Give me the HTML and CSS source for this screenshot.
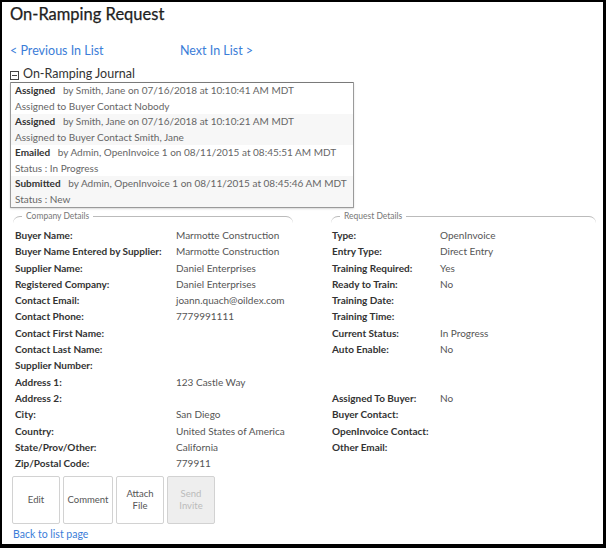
FILE: index.html
```html
<!DOCTYPE html>
<html>
<head>
<meta charset="utf-8">
<link rel="stylesheet" href="styles.css">
</head>
<body>
<div class="frame">
  <h1 class="title">On-Ramping Request</h1>
  <div class="nav">
    <a class="link" href="#">&lt; Previous In List</a>
    <a class="link" href="#">Next In List &gt;</a>
  </div>
  <div class="journal-head">
    <span class="collapse"></span>
    <span>On-Ramping Journal</span>
  </div>
  <div class="journal">
    <div class="entry">
      <div class="line"><b>Assigned</b>&nbsp;&nbsp; by Smith, Jane on 07/16/2018 at 10:10:41 AM MDT</div>
      <div class="line">Assigned to Buyer Contact Nobody</div>
    </div>
    <div class="entry alt">
      <div class="line"><b>Assigned</b>&nbsp;&nbsp; by Smith, Jane on 07/16/2018 at 10:10:21 AM MDT</div>
      <div class="line">Assigned to Buyer Contact Smith, Jane</div>
    </div>
    <div class="entry">
      <div class="line"><b>Emailed</b>&nbsp;&nbsp; by Admin, OpenInvoice 1 on 08/11/2015 at 08:45:51 AM MDT</div>
      <div class="line">Status : In Progress</div>
    </div>
    <div class="entry alt">
      <div class="line"><b>Submitted</b>&nbsp;&nbsp; by Admin, OpenInvoice 1 on 08/11/2015 at 08:45:46 AM MDT</div>
      <div class="line">Status : New</div>
    </div>
  </div>
  <div class="details">
    <fieldset class="group company">
      <legend>Company Details</legend>
      <dl class="rows">
        <dt>Buyer Name:</dt><dd>Marmotte Construction</dd>
        <dt>Buyer Name Entered by Supplier:</dt><dd>Marmotte Construction</dd>
        <dt>Supplier Name:</dt><dd>Daniel Enterprises</dd>
        <dt>Registered Company:</dt><dd>Daniel Enterprises</dd>
        <dt>Contact Email:</dt><dd>joann.quach@oildex.com</dd>
        <dt>Contact Phone:</dt><dd>7779991111</dd>
        <dt>Contact First Name:</dt><dd></dd>
        <dt>Contact Last Name:</dt><dd></dd>
        <dt>Supplier Number:</dt><dd></dd>
        <dt>Address 1:</dt><dd>123 Castle Way</dd>
        <dt>Address 2:</dt><dd></dd>
        <dt>City:</dt><dd>San Diego</dd>
        <dt>Country:</dt><dd>United States of America</dd>
        <dt>State/Prov/Other:</dt><dd>California</dd>
        <dt>Zip/Postal Code:</dt><dd>779911</dd>
      </dl>
    </fieldset>
    <fieldset class="group request">
      <legend>Request Details</legend>
      <dl class="rows">
        <dt>Type:</dt><dd>OpenInvoice</dd>
        <dt>Entry Type:</dt><dd>Direct Entry</dd>
        <dt>Training Required:</dt><dd>Yes</dd>
        <dt>Ready to Train:</dt><dd>No</dd>
        <dt>Training Date:</dt><dd></dd>
        <dt>Training Time:</dt><dd></dd>
        <dt>Current Status:</dt><dd>In Progress</dd>
        <dt>Auto Enable:</dt><dd>No</dd>
        <dt class="blank">&nbsp;</dt><dd></dd>
        <dt class="blank">&nbsp;</dt><dd></dd>
        <dt>Assigned To Buyer:</dt><dd>No</dd>
        <dt>Buyer Contact:</dt><dd></dd>
        <dt>OpenInvoice Contact:</dt><dd></dd>
        <dt>Other Email:</dt><dd></dd>
      </dl>
    </fieldset>
  </div>
  <div class="actions">
    <button class="btn">Edit</button>
    <button class="btn">Comment</button>
    <button class="btn">Attach<br>File</button>
    <button class="btn disabled" disabled>Send<br>Invite</button>
  </div>
  <a class="link back" href="#">Back to list page</a>
</div>
</body>
</html>
```

FILE: styles.css
```css
* { box-sizing: border-box; }
html, body { margin: 0; padding: 0; background: #fff; }
body { font-family: Lato, "Open Sans", Arial, sans-serif; color: #444; }

.frame {
  width: 606px;
  height: 548px;
  border-style: solid;
  border-color: #000;
  border-width: 2px 3px 4px 2px;
  padding: 0 0 0 8px;
  background: #fff;
  overflow: hidden;
}

.title {
  margin: 0;
  padding-top: 3px;
  font-size: 16.5px;
  line-height: 19px;
  font-weight: 400;
  color: #1e1e1e;
  -webkit-text-stroke: 0.25px #1e1e1e;
}

.nav {
  display: grid;
  grid-template-columns: 170px auto;
  margin-top: 19px;
  font-size: 12.5px;
  line-height: 16px;
}

.link { color: #3b7dd8; text-decoration: none; }

.journal-head {
  display: flex;
  align-items: center;
  gap: 4px;
  margin-top: 7px;
  font-size: 12.5px;
  line-height: 16px;
  color: #333;
}

.collapse {
  position: relative;
  width: 9px;
  height: 9px;
  border: 1px solid #444;
  margin-top: 2px;
}
.collapse::after {
  content: "";
  position: absolute;
  left: 1px;
  right: 1px;
  top: 3px;
  height: 1px;
  background: #444;
}

.journal {
  width: 344px;
  margin-top: 0;
  border: 1px solid #9a9a9a;
  border-top-color: #7a7a7a;
  border-radius: 1px;
  box-shadow: 0 1px 2px rgba(0,0,0,0.15);
  font-size: 10px;
  color: #666;
}
.entry.alt { background: #f7f7f7; }
.line {
  padding-left: 4px;
  height: 15.5px;
  line-height: 15.5px;
  white-space: nowrap;
}
.line b { color: #333; font-weight: 700; }

.details {
  display: grid;
  grid-template-columns: 283px 265px;
  column-gap: 38px;
  margin-top: 3px;
}

.group {
  margin: 0;
  padding: 0;
  border: 0;
  border-top: 1px solid #bbb;
  border-radius: 7px 7px 0 0;
  min-width: 0;
}
.group legend {
  padding: 0 4px;
  margin-left: 9px;
  font-size: 8.5px;
  color: #777;
  line-height: 10px;
}
.company { margin-left: 3px; }

.rows {
  display: grid;
  margin: 6px 0 0 0;
  font-size: 10px;
  line-height: 16.3px;
}
.company .rows { grid-template-columns: 161px auto; padding-left: 2px; }
.request .rows { grid-template-columns: 108px auto; padding-left: 1px; }
.rows dt { font-weight: 700; color: #333; white-space: nowrap; }
.rows dd { margin: 0; color: #555; white-space: nowrap; }

.actions {
  display: flex;
  gap: 3px;
  margin-top: 5px;
  margin-left: 2px;
}
.btn {
  width: 48px;
  height: 48px;
  padding: 0;
  background: #fff;
  border: 1px solid #d2d2d2;
  border-radius: 2px;
  font-family: inherit;
  font-size: 9.5px;
  line-height: 12px;
  color: #555;
}
.btn:nth-child(2) { width: 50px; }
.btn.disabled { background: #eee; color: #bbb; }

.back {
  display: block;
  margin-top: 3px;
  margin-left: 3px;
  font-size: 10.5px;
  line-height: 14px;
}
```
